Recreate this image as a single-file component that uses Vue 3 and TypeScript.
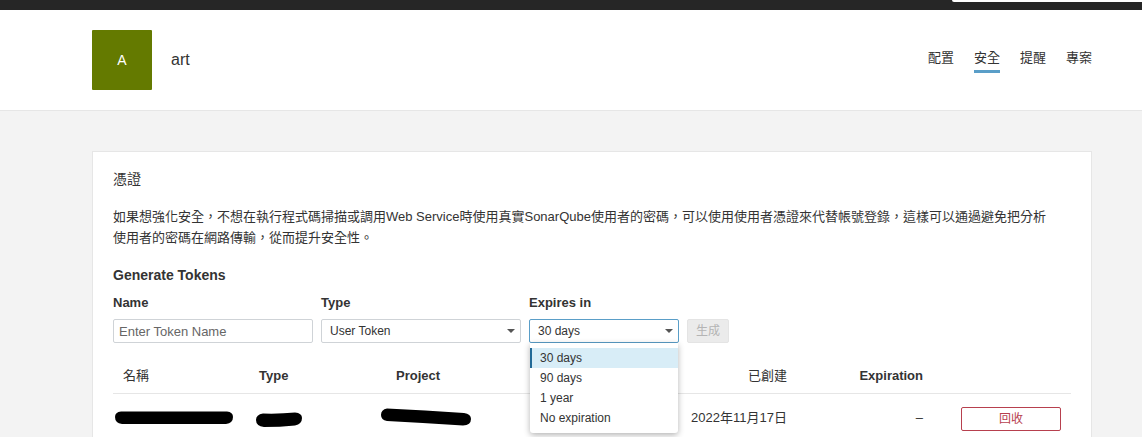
<script setup lang="ts">
const tabs = [
  { label: '配置', active: false },
  { label: '安全', active: true },
  { label: '提醒', active: false },
  { label: '專案', active: false },
]
const options = ['30 days', '90 days', '1 year', 'No expiration']
</script>

<template>
  <div class="page" lang="zh-TW">
    <div class="topbar"><span class="corner"></span></div>
    <header class="head">
      <div class="user">
        <div class="avatar">A</div>
        <span class="uname">art</span>
      </div>
      <nav class="tabs">
        <a v-for="t in tabs" :key="t.label" class="tab" :class="{ active: t.active }">{{ t.label }}</a>
      </nav>
    </header>
    <main class="main">
      <section class="card">
        <h2 class="title">憑證</h2>
        <p class="desc">如果想強化安全，不想在執行程式碼掃描或調用Web Service時使用真實SonarQube使用者的密碼，可以使用使用者憑證來代替帳號登錄，這樣可以通過避免把分析使用者的密碼在網路傳輸，從而提升安全性。</p>
        <h3 class="gen">Generate Tokens</h3>
        <div class="form">
          <div class="field f-name">
            <label>Name</label>
            <input class="input" placeholder="Enter Token Name" />
          </div>
          <div class="field f-type">
            <label>Type</label>
            <div class="select"><span>User Token</span><i class="caret"></i></div>
          </div>
          <div class="field f-exp">
            <label>Expires in</label>
            <div class="select focus"><span>30 days</span><i class="caret"></i></div>
            <ul class="menu">
              <li v-for="(o, i) in options" :key="o" :class="{ sel: i === 0 }">{{ o }}</li>
            </ul>
          </div>
          <button class="gen-btn" disabled>生成</button>
        </div>
        <div class="thead">
          <span>名稱</span>
          <span>Type</span>
          <span>Project</span>
          <span class="r">已創建</span>
          <span class="r">Expiration</span>
          <span></span>
        </div>
        <div class="trow">
          <span class="b1"><svg class="blot" width="120" height="15" viewBox="0 0 120 15"><path d="M7 1.5 H113 Q119 2 119 7 Q119 13 112 14 H8 Q1 13 1 7 Q1 2 7 1.5Z" fill="#000"/></svg></span>
          <span class="b2"><svg class="blot" width="48" height="15" viewBox="0 0 48 15"><path d="M8 1.5 Q25 2 40 0.5 Q47 1 47 6 Q47 12 40 13.5 Q25 15 9 15 Q1 14 1 8 Q1 2.5 8 1.5Z" fill="#000"/></svg></span>
          <span class="b3"><svg class="blot" width="92" height="18" viewBox="0 0 92 18"><path d="M7 0.5 Q45 2 84 5 Q91 6 91 11 Q91 17 83 17.5 Q45 15 7 13 Q1 12 1 7 Q1 1.5 7 0.5Z" fill="#000"/></svg></span>
          <span class="r date">2022年11月17日</span>
          <span class="r date">–</span>
          <span class="act"><button class="revoke">回收</button></span>
        </div>
      </section>
    </main>
  </div>
</template>

<style>
html, body { margin: 0; overflow: hidden; }
</style>

<style scoped>
.page {
  position: relative;
  height: 437px;
  overflow: hidden;
  background: #f3f3f3;
  color: #333;
  font: 13px/20px "Liberation Sans", "Noto Sans CJK TC", sans-serif;
}
.topbar { height: 10px; background: #262626; position: relative; }
.corner {
  position: absolute;
  left: 952px;
  right: 0;
  top: 0;
  height: 2px;
  background: #fff;
  border-bottom-left-radius: 2px;
}
.head {
  height: 100px;
  background: #fff;
  border-bottom: 1px solid #e6e6e6;
  display: flex;
  align-items: center;
  justify-content: space-between;
  padding: 0 50px 0 92px;
}
.user { display: flex; align-items: center; gap: 19px; }
.avatar {
  width: 60px;
  height: 60px;
  border-radius: 1px;
  background: #647a00;
  color: #fff;
  font-size: 14px;
  line-height: 60px;
  text-align: center;
}
.uname { font-size: 16px; }
.tabs { display: flex; gap: 20px; margin-top: 1px; }
.tab {
  height: 25px;
  box-sizing: border-box;
  line-height: 20px;
  border-bottom: 3px solid transparent;
}
.tab.active { border-bottom-color: #5a9ec8; }
.main { padding: 40px 50px 0 92px; }
.card {
  background: #fff;
  border: 1px solid #e6e6e6;
  padding: 17px 20px 0;
  height: 400px;
  box-sizing: border-box;
}
.title { margin: 0; font-size: 14px; line-height: 20px; font-weight: 400; }
.desc { margin: 17px 0 0; line-height: 21px; width: 940px; }
.gen { margin: 17px 0 0; font-size: 14px; line-height: 20px; font-weight: 700; }
.form { display: flex; gap: 8px; align-items: flex-end; margin-top: 8px; }
.field { display: flex; flex-direction: column; position: relative; }
.field label { font-weight: 700; line-height: 20px; margin-bottom: 6px; }
.f-name, .f-type { width: 200px; }
.f-exp { width: 150px; }
.input, .select {
  box-sizing: border-box;
  height: 24px;
  border: 1px solid #cfd3d7;
  border-radius: 2px;
  background: #fff;
  font: inherit;
  color: #333;
}
.input { padding: 0 5px; width: 100%; outline: none; }
.input::placeholder { color: #666; opacity: 1; }
.select {
  display: flex;
  align-items: center;
  justify-content: space-between;
  padding: 0 5px 0 8px;
  font-size: 12px;
}
.select.focus { border-color: #5a9ec8; }
.caret {
  width: 0;
  height: 0;
  border-left: 4px solid transparent;
  border-right: 4px solid transparent;
  border-top: 4px solid #555;
}
.menu {
  position: absolute;
  z-index: 2;
  top: 50px;
  left: 1px;
  width: 148px;
  box-sizing: border-box;
  margin: 0;
  padding: 5px 0 5px;
  list-style: none;
  background: #fff;
  border-radius: 0 0 3px 3px;
  box-shadow: 0 2px 6px rgba(0, 0, 0, 0.3);
  font-size: 12px;
}
.menu li { height: 20px; line-height: 20px; padding-left: 10px; }
.menu li.sel {
  background: #d8edf7;
  box-shadow: inset 2px 0 0 #236a97;
}
.gen-btn {
  width: 42px;
  height: 24px;
  padding: 0;
  background: #ebebeb;
  border: 1px solid #e4e4e4;
  border-radius: 2px;
  color: #b4b4b4;
  font: inherit;
  font-size: 12px;
}
.thead, .trow {
  display: grid;
  grid-template-columns: 136px 137px 250px 161px 136px 1fr;
  width: 958px;
  align-items: center;
}
.thead {
  margin-top: 16px;
  height: 34px;
  border-bottom: 1px solid #e6e6e6;
  font-weight: 700;
}
.thead > span { padding: 0 10px; }
.thead > span:nth-child(1), .thead > span:nth-child(4) { font-weight: 400; }
.trow { height: 50px; }
.trow > span { padding: 0 10px; }
.r { text-align: right; }
.blot { display: block; }
.trow > .b1 { padding: 0 0 3px 1px; }
.trow > .b2 { padding: 0 0 0 6px; }
.trow > .b3 { padding: 0 0 4px; margin-left: -6px; }
.trow > .date { padding-bottom: 3px; }
.act { display: flex; justify-content: flex-end; }
.revoke {
  width: 100px;
  height: 24px;
  padding: 0;
  background: #fff;
  border: 1px solid #b7404e;
  border-radius: 2px;
  color: #b7404e;
  font: inherit;
  font-size: 12px;
}
</style>
